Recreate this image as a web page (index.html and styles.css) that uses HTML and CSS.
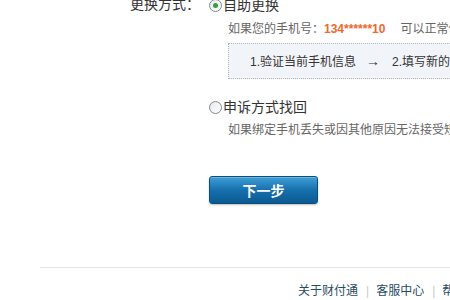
FILE: index.html
```html
<!DOCTYPE html>
<html lang="zh-CN">
<head>
<meta charset="utf-8">
<title>更换手机</title>
<link rel="stylesheet" href="styles.css">
</head>
<body>
<div class="page">
  <div class="form-row">
    <div class="label">更换方式：</div>
    <div class="options">
      <div class="opt"><span class="radio checked"></span><span class="opt-text">自助更换</span></div>
      <div class="desc">如果您的手机号：<b class="phone">134******10</b><span class="gap"></span>可以正常使用，请选择自助更换</div>
      <div class="steps">1.验证当前手机信息<span class="arrow">→</span>2.填写新的手机信息<span class="arrow">→</span>3.完成</div>
      <div class="opt opt2"><span class="radio"></span><span class="opt-text">申诉方式找回</span></div>
      <div class="desc">如果绑定手机丢失或因其他原因无法接受短信，请选择申诉方式</div>
      <button class="btn" type="button">下一步</button>
    </div>
  </div>
  <div class="footer">
    <div class="links"><a href="#">关于财付通</a><span class="sep">|</span><a href="#">客服中心</a><span class="sep">|</span><a href="#">帮助中心</a></div>
  </div>
</div>
</body>
</html>
```

FILE: styles.css
```css
html, body {
  margin: 0;
  padding: 0;
  background: #fff;
  overflow: hidden;
}
body {
  font-family: "Liberation Sans", "Noto Sans CJK SC", sans-serif;
  font-size: 12px;
  color: #333;
  width: 450px;
  height: 300px;
}
.page {
  width: 450px;
  overflow: hidden;
}
.form-row {
  display: flex;
  margin-top: -6px;
  white-space: nowrap;
}
.label {
  width: 200px;
  flex: none;
  text-align: right;
  font-size: 14px;
  line-height: 20px;
  color: #333;
  padding-right: 9px;
}
.options {
  flex: none;
  width: 400px;
}
.opt {
  display: flex;
  align-items: center;
  height: 20px;
  font-size: 14px;
  color: #333;
}
.opt2 {
  margin-top: 17px;
}
.radio {
  display: inline-block;
  box-sizing: border-box;
  width: 13px;
  height: 13px;
  border: 1px solid #7f8c99;
  border-radius: 50%;
  background: linear-gradient(135deg, #e6e9ec, #ffffff);
  position: relative;
  top: 1px;
}
.radio.checked::after {
  content: "";
  position: absolute;
  left: 3px;
  top: 3px;
  width: 5px;
  height: 5px;
  border-radius: 50%;
  background: #3a9e3a;
}
.opt-text {
  margin-left: 1px;
}
.desc {
  margin-left: 19px;
  margin-top: 5px;
  line-height: 20px;
  color: #666;
}
.opt2 + .desc {
  margin-top: 4px;
}
.phone {
  color: #f0682a;
  font-weight: bold;
}
.gap {
  display: inline-block;
  width: 15px;
}
.steps {
  margin-left: 19px;
  margin-top: 4px;
  box-sizing: border-box;
  height: 36px;
  line-height: 34px;
  border: 1px dotted #b5b5b5;
  background: #f1f4f8;
  padding-left: 21px;
  color: #333;
  width: 420px;
}
.arrow {
  display: inline-block;
  font-size: 14px;
  font-weight: bold;
  margin: 0 12px 0 10px;
}
.btn {
  display: block;
  margin-top: 36px;
  width: 109px;
  height: 28px;
  border: 1px solid #0b4d7c;
  border-radius: 3px;
  background: linear-gradient(#3f9fd6, #1670ad 50%, #0c5a92);
  box-shadow: 0 1px 2px rgba(0,0,0,0.25), inset 0 1px 0 rgba(255,255,255,0.25);
  color: #fff;
  font-family: "Noto Sans CJK SC", sans-serif;
  font-size: 14px;
  font-weight: bold;
  padding: 0;
  cursor: pointer;
}
.footer {
  margin-top: 63px;
  margin-left: 40px;
  border-top: 1px solid #e6e6e6;
  padding-top: 13px;
  white-space: nowrap;
}
.links {
  padding-left: 258px;
  line-height: 20px;
}
.links a {
  color: #1f4d63;
  text-decoration: none;
}
.sep {
  color: #c8c8c8;
  margin: 0 7px 0 8px;
}
```
